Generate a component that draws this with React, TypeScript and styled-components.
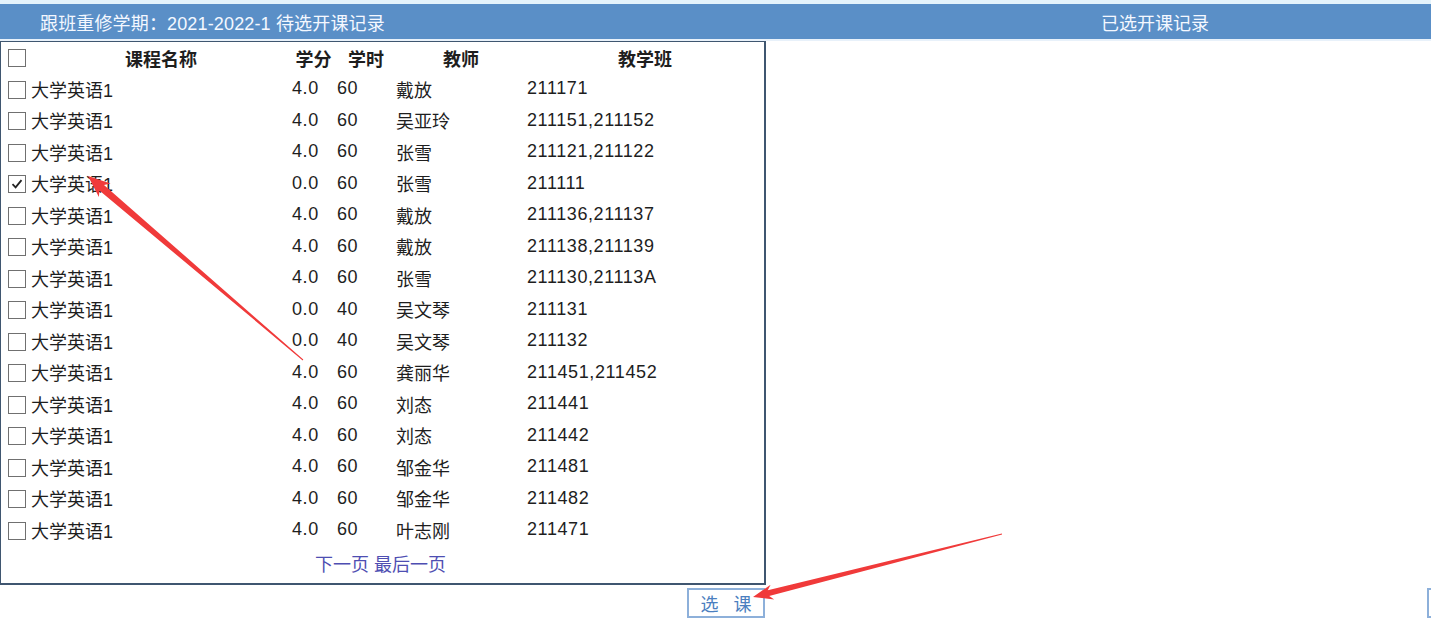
import styled, { createGlobalStyle } from 'styled-components';

const courses = [
  { credit: '4.0', hours: '60', teacher: '戴放', klass: '211171', checked: false },
  { credit: '4.0', hours: '60', teacher: '吴亚玲', klass: '211151,211152', checked: false },
  { credit: '4.0', hours: '60', teacher: '张雪', klass: '211121,211122', checked: false },
  { credit: '0.0', hours: '60', teacher: '张雪', klass: '211111', checked: true },
  { credit: '4.0', hours: '60', teacher: '戴放', klass: '211136,211137', checked: false },
  { credit: '4.0', hours: '60', teacher: '戴放', klass: '211138,211139', checked: false },
  { credit: '4.0', hours: '60', teacher: '张雪', klass: '211130,21113A', checked: false },
  { credit: '0.0', hours: '40', teacher: '吴文琴', klass: '211131', checked: false },
  { credit: '0.0', hours: '40', teacher: '吴文琴', klass: '211132', checked: false },
  { credit: '4.0', hours: '60', teacher: '龚丽华', klass: '211451,211452', checked: false },
  { credit: '4.0', hours: '60', teacher: '刘态', klass: '211441', checked: false },
  { credit: '4.0', hours: '60', teacher: '刘态', klass: '211442', checked: false },
  { credit: '4.0', hours: '60', teacher: '邹金华', klass: '211481', checked: false },
  { credit: '4.0', hours: '60', teacher: '邹金华', klass: '211482', checked: false },
  { credit: '4.0', hours: '60', teacher: '叶志刚', klass: '211471', checked: false },
];

export default function App() {
  return (
    <Page>
      <GlobalStyle />
      <TopStrip />
      <HeaderBar>
        <LeftTitle>跟班重修学期：2021-2022-1 待选开课记录</LeftTitle>
        <RightTitle>已选开课记录</RightTitle>
      </HeaderBar>
      <Body>
        <ListBox>
          <Table>
            <colgroup>
              <col style={{ width: 30 }} />
              <col style={{ width: 260 }} />
              <col style={{ width: 45 }} />
              <col style={{ width: 60 }} />
              <col style={{ width: 130 }} />
              <col />
            </colgroup>
            <thead>
              <tr>
                <HeadCell><CheckBox /></HeadCell>
                <HeadCell>课程名称</HeadCell>
                <HeadCell>学分</HeadCell>
                <HeadCell>学时</HeadCell>
                <HeadCell>教师</HeadCell>
                <HeadCell>教学班</HeadCell>
              </tr>
            </thead>
            <tbody>
              {courses.map((c, i) => (
                <Row key={i}>
                  <Cell>
                    <CheckBox>
                      {c.checked && (
                        <svg width="12" height="12" viewBox="0 0 12 12">
                          <path d="M1.5 6.2 L4.6 9.3 L10.5 2.2" fill="none" stroke="#222" strokeWidth="1.8" />
                        </svg>
                      )}
                    </CheckBox>
                  </Cell>
                  <Cell>大学英语1</Cell>
                  <NumCell>{c.credit}</NumCell>
                  <NumCell>{c.hours}</NumCell>
                  <Cell>{c.teacher}</Cell>
                  <NumCell>{c.klass}</NumCell>
                </Row>
              ))}
            </tbody>
          </Table>
          <Pager>
            <PageLink>下一页</PageLink> <PageLink>最后一页</PageLink>
          </Pager>
        </ListBox>
      </Body>
      <Footer>
        <LeftActions>
          <ActionButton>选&nbsp;&nbsp;&nbsp;课</ActionButton>
        </LeftActions>
        <RightActions>
          {/* the drop button sits past the right edge; only its left border shows */}
          <ActionButton aria-label="退课" title="退课" />
        </RightActions>
      </Footer>
      <Annotations width="1431" height="620" viewBox="0 0 1431 620">
        <polygon
          fill="#f03a3a"
          points="88,176 110.6,183.5 104,185 303.3,359.6 302.7,360.4 99.4,190.4 98.9,197.1"
        />
        <polygon
          fill="#f03a3a"
          points="753,597 770.6,584.8 767.8,590.2 1001.9,533.5 1002.1,534.5 769.2,596 774.2,599.4"
        />
      </Annotations>
    </Page>
  );
}

const GlobalStyle = createGlobalStyle`
  html, body {
    margin: 0;
    padding: 0;
    background: #ffffff;
    overflow: hidden;
  }
  body {
    font-family: "Liberation Sans", "Noto Sans CJK SC", sans-serif;
    font-size: 18px;
    color: #1e1e1e;
  }
`;

const Page = styled.div`
  position: relative;
  width: 1431px;
  height: 620px;
  overflow: hidden;
`;

const TopStrip = styled.div`
  height: 4px;
  background: #e4f3fb;
`;

const HeaderBar = styled.div`
  display: flex;
  align-items: center;
  height: 35px;
  background: #5a8fc7;
  color: #f4f8ff;
  border-bottom: 2px solid #e8f1fa;
`;

const LeftTitle = styled.div`
  flex-shrink: 0;
  box-sizing: border-box;
  width: 1101px;
  padding-left: 40px;
  letter-spacing: 0.15px;
`;

const RightTitle = styled.div`
  flex: 1;
`;

const Body = styled.div`
  display: flex;
`;

const ListBox = styled.div`
  width: 763px;
  border: 1px solid #3f5670;
  border-width: 1px 2px 2px 1px;
`;

const Table = styled.table`
  width: 100%;
  table-layout: fixed;
  border-collapse: collapse;
`;

const HeadCell = styled.th`
  height: 31px;
  padding: 0;
  font-weight: bold;
  text-align: center;
  vertical-align: middle;
  &:first-child {
    text-align: left;
    padding-left: 7px;
  }
`;

const Row = styled.tr`
  height: 31.5px;
`;

const Cell = styled.td`
  padding: 0;
  white-space: nowrap;
  vertical-align: middle;
  &:first-child {
    padding-left: 7px;
  }
`;

const NumCell = styled(Cell)`
  padding-left: 1px;
  letter-spacing: 0.6px;
`;

const CheckBox = styled.span`
  display: inline-flex;
  align-items: center;
  justify-content: center;
  box-sizing: border-box;
  width: 18px;
  height: 18px;
  border: 1px solid #707070;
  background: #fff;
  vertical-align: middle;
`;

const Pager = styled.div`
  height: 37px;
  display: flex;
  align-items: center;
  justify-content: center;
  gap: 5px;
  padding-right: 4px;
  padding-bottom: 3px;
  box-sizing: border-box;
`;

const PageLink = styled.a`
  color: #4e4eb2;
  cursor: pointer;
`;

const Footer = styled.div`
  display: flex;
  padding-top: 3px;
`;

const LeftActions = styled.div`
  width: 765px;
  flex-shrink: 0;
  display: flex;
  justify-content: flex-end;
`;

const RightActions = styled.div`
  flex: 1;
  min-width: 0;
  overflow: hidden;
  padding-left: 662px;
`;

const ActionButton = styled.button`
  box-sizing: border-box;
  width: 78px;
  height: 30px;
  flex-shrink: 0;
  padding: 0;
  border: 2px solid #8db0da;
  background: #fff;
  color: #4b7fc0;
  font-family: "Liberation Sans", "Noto Sans CJK SC", sans-serif;
  font-size: 18px;
  white-space: nowrap;
`;

const Annotations = styled.svg`
  position: absolute;
  left: 0;
  top: 0;
  pointer-events: none;
`;
